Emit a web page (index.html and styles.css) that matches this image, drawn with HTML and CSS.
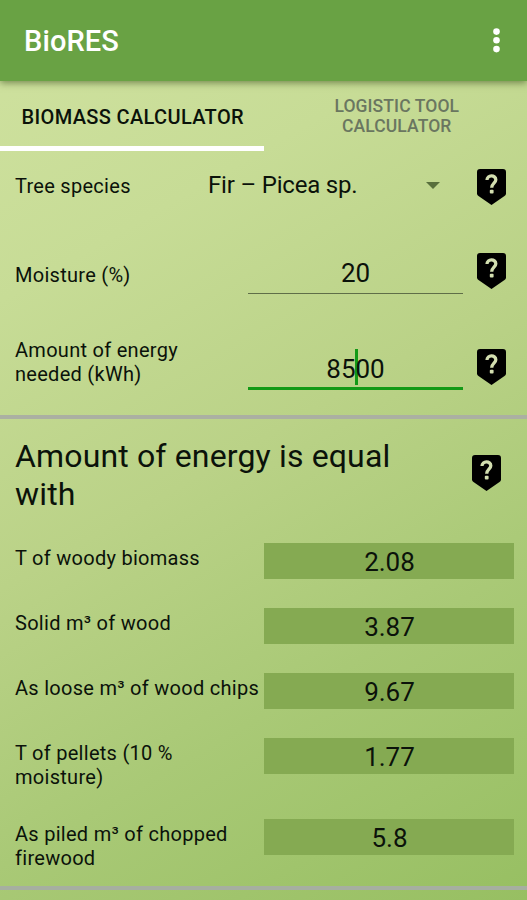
FILE: index.html
```html
<!DOCTYPE html>
<html lang="en">
<head>
    <meta charset="UTF-8">
    <meta name="viewport" content="width=device-width, initial-scale=1.0">
    <title>BioRES</title>
    <link rel="stylesheet" href="styles.css">
</head>
<body>

<!-- Shared help icon -->
<svg class="icon-defs" width="0" height="0">
    <symbol id="help" viewBox="0 0 29 36">
        <path d="M3 0H26Q29 0 29 3V24.5Q29 26 27.5 27L14.5 36L1.5 27Q0 26 0 24.5V3Q0 0 3 0Z" fill="#000"/>
        <path d="M10 11C10 5.6 18.8 5.6 18.8 10.7C18.8 14 14.7 14.5 14.7 18.8" fill="none" stroke="#d3dfb0" stroke-width="3.3"/>
        <rect x="12.8" y="20.8" width="3.8" height="3.8" rx="1" fill="#d3dfb0"/>
    </symbol>
</svg>

<header class="app-bar">
    <h1>BioRES</h1>
    <svg class="menu" width="8" height="26" viewBox="0 0 8 26" fill="#fff">
        <circle cx="4.5" cy="3.6" r="3.3"/>
        <circle cx="4.5" cy="12.3" r="3.3"/>
        <circle cx="4.5" cy="21.1" r="3.3"/>
    </svg>
</header>

<nav class="tabs">
    <div class="tab active">BIOMASS CALCULATOR</div>
    <div class="tab">LOGISTIC TOOL<br>CALCULATOR</div>
</nav>

<!-- Inputs -->
<section class="inputs">
    <div class="row species">
        <div class="label">Tree species</div>
        <div class="select"><span>Fir – Picea sp.</span><i class="arrow"></i></div>
        <svg class="help"><use href="#help"/></svg>
    </div>
    <div class="row moisture">
        <div class="label">Moisture (%)</div>
        <div class="field">20</div>
        <svg class="help"><use href="#help"/></svg>
    </div>
    <div class="row energy">
        <div class="label">Amount of energy needed (kWh)</div>
        <div class="field focused">85<span class="cursor"></span>00</div>
        <svg class="help"><use href="#help"/></svg>
    </div>
</section>

<!-- Results -->
<section class="results">
    <div class="results-title">
        <h2>Amount of energy is equal with</h2>
        <svg class="help"><use href="#help"/></svg>
    </div>
    <div class="result">
        <div class="label">T of woody biomass</div>
        <div class="value">2.08</div>
    </div>
    <div class="result">
        <div class="label">Solid m³ of wood</div>
        <div class="value">3.87</div>
    </div>
    <div class="result">
        <div class="label">As loose m³ of wood chips</div>
        <div class="value">9.67</div>
    </div>
    <div class="result tall">
        <div class="label">T of pellets (10 %<br>moisture)</div>
        <div class="value">1.77</div>
    </div>
    <div class="result">
        <div class="label">As piled m³ of chopped<br>firewood</div>
        <div class="value">5.8</div>
    </div>
</section>

</body>
</html>
```

FILE: styles.css
```css
* {
    box-sizing: border-box;
}
body {
    margin: 0;
    height: 900px;
    overflow: hidden;
    font-family: Roboto, sans-serif;
    color: #0b120a;
    background: linear-gradient(150deg, #d0e2a0 0%, #c7dc96 25%, #bad287 49%, #a9c976 72%, #97bf62 100%);
}
.icon-defs {
    position: absolute;
}
.app-bar {
    position: relative;
    height: 81px;
    padding: 0 27px 0 24px;
    display: flex;
    align-items: center;
    justify-content: space-between;
    background-color: #69a244;
    box-shadow: 0 2px 7px rgba(60, 80, 30, 0.6);
}
.app-bar h1 {
    margin: 0;
    font-size: 29px;
    font-weight: 500;
    letter-spacing: 0.1px;
    color: #fff;
}
.tabs {
    height: 70px;
    display: flex;
}
.tab {
    width: 264px;
    height: 70px;
    display: flex;
    align-items: center;
    justify-content: center;
    text-align: center;
    font-size: 17.5px;
    font-weight: 500;
    line-height: 20px;
    letter-spacing: 0.1px;
    padding-left: 3px;
    color: #6a7660;
}
.tab.active {
    font-size: 20px;
    letter-spacing: 0.35px;
    color: #0b120a;
    border-bottom: 5px solid #fff;
    padding: 7px 0 0 2px;
}
.inputs {
    height: 268px;
    border-bottom: 4px solid #abb0a2;
}
.row {
    height: 96px;
    padding: 0 21px 0 15px;
    display: flex;
    align-items: center;
}
.row.species {
    height: 72px;
}
.label {
    width: 193px;
    font-size: 20px;
    line-height: 24px;
    letter-spacing: 0.28px;
}
.species .label {
    padding-bottom: 2px;
}
.moisture .label {
    padding-top: 8px;
}
.energy .label {
    padding-bottom: 10px;
}
.help {
    width: 29px;
    height: 36px;
    flex-shrink: 0;
}
.row .help {
    margin-left: auto;
}
.select {
    width: 232px;
    display: flex;
    align-items: center;
    justify-content: space-between;
    font-size: 24px;
    letter-spacing: -0.2px;
    padding-bottom: 4px;
}
.arrow {
    border-left: 7px solid transparent;
    border-right: 7px solid transparent;
    border-top: 7px solid #59703d;
}
.field {
    width: 215px;
    height: 45px;
    margin-left: 40px;
    text-align: center;
    font-size: 26px;
    line-height: 48px;
    border-bottom: 1px solid #5f6e48;
}
.field.focused {
    border-bottom: 3px solid #139a16;
}
.cursor {
    display: inline-block;
    width: 3px;
    height: 36px;
    margin: -4px -2px 4px -1px;
    vertical-align: middle;
    background-color: #139a16;
}
.results {
    height: 471px;
    border-bottom: 4px solid #a6afa0;
}
.results-title {
    height: 124px;
    padding: 18px 26px 0 15px;
    display: flex;
    justify-content: space-between;
}
.results-title h2 {
    margin: 0;
    width: 400px;
    font-size: 32px;
    font-weight: 400;
    line-height: 38px;
    letter-spacing: 0.15px;
}
.results-title .help {
    margin-top: 18px;
}
.result {
    height: 65px;
    padding: 0 13px 0 15px;
    display: flex;
}
.result.tall {
    height: 81px;
}
.result .label {
    width: 249px;
    padding-top: 3px;
    white-space: nowrap;
}
.value {
    width: 250px;
    height: 36px;
    padding-left: 1px;
    text-align: center;
    font-size: 26px;
    line-height: 39px;
    background-color: #85aa52;
}
```
